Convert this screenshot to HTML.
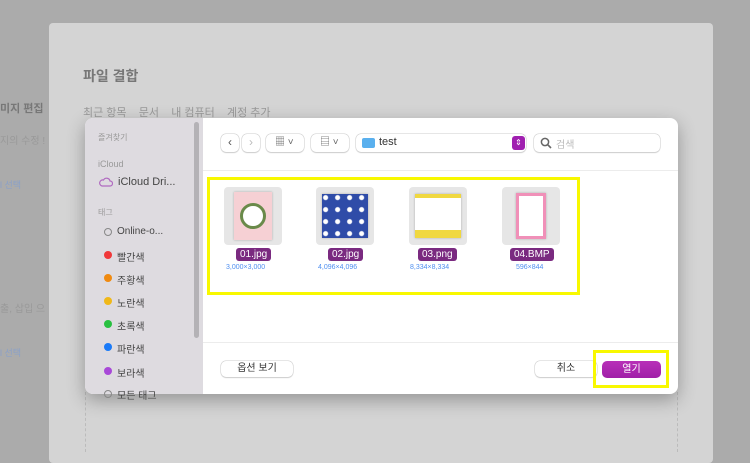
<!DOCTYPE html>
<html><head><meta charset="utf-8"><style>
*{margin:0;padding:0;box-sizing:border-box}
body{width:750px;height:451px;background:#ababab;position:relative;overflow:hidden;font-family:"Liberation Sans","Noto Sans CJK KR",sans-serif}
.a{position:absolute}
.t{color:#888;white-space:nowrap}
.btn{position:absolute;background:#fff;border-radius:5px;box-shadow:0 0 0 0.5px #ccc,0 1px 1px #ccc}
.th{position:absolute;width:58px;height:58px;background:#e6e6e6;border-radius:4px}
.th div{position:absolute;left:10px;top:5px;width:38px;height:48px;box-shadow:0 0 2px #aaa}
.lb{position:absolute;background:#7a2a80;color:#fff;font-size:10px;border-radius:3px;padding:1px 4px;white-space:nowrap}
.sz{position:absolute;color:#4f8ff0;font-size:7px;white-space:nowrap}
.tag{position:absolute;left:104px;width:8px;height:8px;border-radius:50%}
.tl{position:absolute;left:117px;font-size:10px;color:#444}
</style></head><body>
<div class="a" style="left:49px;top:23px;width:664px;height:440px;background:#d4d4d4;border-radius:4px"></div>
<div class="a t" style="left:83px;top:66px;font-size:14px;font-weight:bold;color:#777">파일 결합</div>
<div class="a t" style="left:83px;top:104px;font-size:11px;color:#999">최근 항목 &nbsp;&nbsp; 문서 &nbsp;&nbsp; 내 컴퓨터 &nbsp;&nbsp; 계정 추가</div>
<div class="a t" style="left:0;top:100px;font-size:11px;font-weight:bold;color:#777">미지 편집</div>
<div class="a t" style="left:0;top:132px;font-size:10px;color:#999">지의 수정 !</div>
<div class="a t" style="left:0;top:178px;font-size:9px;color:#8aa0c8">l 선택</div>
<div class="a t" style="left:0;top:300px;font-size:10px;color:#999">출, 삽입 으</div>
<div class="a t" style="left:0;top:346px;font-size:9px;color:#8aa0c8">l 선택</div>
<div class="a" style="left:85px;top:392px;width:1px;height:60px;border-left:1px dashed #bbb"></div>
<div class="a" style="left:677px;top:392px;width:1px;height:60px;border-left:1px dashed #bbb"></div>

<div class="a" style="left:85px;top:118px;width:593px;height:276px;background:#fff;border-radius:8px;overflow:hidden;box-shadow:0 6px 18px rgba(0,0,0,.3)">
 <div class="a" style="left:0;top:0;width:118px;height:276px;background:#dedbe0"></div>
 <div class="a" style="left:109px;top:4px;width:5px;height:216px;background:#b4b2b6;border-radius:3px"></div>
 <div class="a" style="left:118px;top:52px;width:475px;height:1px;background:#ececec"></div>
 <div class="a" style="left:118px;top:224px;width:475px;height:1px;background:#ececec"></div>
</div>
<div class="a t" style="left:98px;top:132px;font-size:8px;color:#999">즐겨찾기</div>
<div class="a t" style="left:98px;top:159px;font-size:9px;color:#999">iCloud</div>
<svg class="a" style="left:99px;top:177px" width="14" height="10"><path d="M3 9h8a2.5 2.5 0 0 0 0-5 3.5 3.5 0 0 0-6.5-1A3 3 0 0 0 3 9z" fill="none" stroke="#b06ac0" stroke-width="1.2"/></svg>
<div class="a t" style="left:118px;top:176px;font-size:11px;color:#444">iCloud Dri...</div>
<div class="a t" style="left:98px;top:207px;font-size:8px;color:#999">태그</div>
<div class="tag" style="top:228px;border:1.2px solid #888"></div><div class="tl" style="top:226px">Online-o...</div>
<div class="tag" style="top:251px;background:#f0383a"></div><div class="tl" style="top:249px">빨간색</div>
<div class="tag" style="top:274px;background:#f08a10"></div><div class="tl" style="top:272px">주황색</div>
<div class="tag" style="top:297px;background:#f0b818"></div><div class="tl" style="top:295px">노란색</div>
<div class="tag" style="top:320px;background:#28c040"></div><div class="tl" style="top:318px">초록색</div>
<div class="tag" style="top:343px;background:#1a7af8"></div><div class="tl" style="top:341px">파란색</div>
<div class="tag" style="top:367px;background:#a848d8"></div><div class="tl" style="top:365px">보라색</div>
<div class="tag" style="top:390px;border:1.2px solid #888"></div><div class="tl" style="top:387px">모든 태그</div>

<div class="btn" style="left:221px;top:134px;width:18px;height:18px;font-size:12px;text-align:center;line-height:17px;color:#555">‹</div>
<div class="btn" style="left:242px;top:134px;width:18px;height:18px;font-size:12px;text-align:center;line-height:17px;color:#bbb">›</div>
<div class="btn" style="left:266px;top:134px;width:38px;height:18px;font-size:10px;line-height:18px;padding-left:9px;color:#666">▦ ˅</div>
<div class="btn" style="left:311px;top:134px;width:38px;height:18px;font-size:10px;line-height:18px;padding-left:9px;color:#666">▤ ˅</div>
<div class="btn" style="left:356px;top:134px;width:170px;height:18px"></div>
<div class="a" style="left:362px;top:138px;width:13px;height:10px;background:#5ab0ee;border-radius:2px"></div>
<div class="a t" style="left:379px;top:136px;font-size:11px;color:#333">test</div>
<div class="a" style="left:512px;top:136px;width:13px;height:14px;background:#a020b0;border-radius:3px;color:#fff;font-size:8px;text-align:center;line-height:14px">⇕</div>
<div class="btn" style="left:534px;top:134px;width:126px;height:18px"></div>
<svg class="a" style="left:540px;top:137px" width="12" height="12"><circle cx="5" cy="5" r="3.6" fill="none" stroke="#666" stroke-width="1.5"/><path d="M7.6 7.6L11 11" stroke="#666" stroke-width="1.6"/></svg>
<div class="a t" style="left:556px;top:136px;font-size:10px;color:#bbb">검색</div>

<div class="a" style="left:207px;top:177px;width:373px;height:118px;border:3px solid #f8f800"></div>
<div class="th" style="left:224px;top:187px"><div style="background:#f6d0d4"><span style="position:absolute;left:6px;top:11px;width:26px;height:26px;border-radius:50%;background:#fff;border:3px solid #6a8a4a"></span></div></div>
<div class="lb" style="left:236px;top:248px">01.jpg</div><div class="sz" style="left:226px;top:264px">3,000×3,000</div>
<div class="th" style="left:316px;top:187px"><div style="left:6px;top:7px;width:46px;height:44px;background:radial-gradient(circle at 30% 30%,#fff 2px,transparent 3px) 0 0/12px 12px,#2f4ca8"></div></div>
<div class="lb" style="left:328px;top:248px">02.jpg</div><div class="sz" style="left:318px;top:264px">4,096×4,096</div>
<div class="th" style="left:409px;top:187px"><div style="left:6px;top:7px;width:46px;height:44px;background:linear-gradient(#f0d840 0 4px,#fff 4px 36px,#f0d840 36px)"></div></div>
<div class="lb" style="left:418px;top:248px">03.png</div><div class="sz" style="left:410px;top:264px">8,334×8,334</div>
<div class="th" style="left:502px;top:187px"><div style="left:14px;top:6px;width:30px;height:46px;background:#fff;border:3px solid #f090b8"></div></div>
<div class="lb" style="left:510px;top:248px">04.BMP</div><div class="sz" style="left:516px;top:264px">596×844</div>

<div class="btn" style="left:221px;top:361px;width:72px;height:16px;font-size:10px;text-align:center;line-height:16px;color:#333">옵션 보기</div>
<div class="btn" style="left:535px;top:361px;width:62px;height:16px;font-size:10px;text-align:center;line-height:16px;color:#333">취소</div>
<div class="a" style="left:593px;top:350px;width:76px;height:38px;border:3px solid #f8f800"></div>
<div class="a" style="left:602px;top:361px;width:59px;height:17px;background:linear-gradient(#b830b8,#a020a8);border-radius:5px;color:#fff;font-size:10px;text-align:center;line-height:17px">열기</div>
</body></html>
